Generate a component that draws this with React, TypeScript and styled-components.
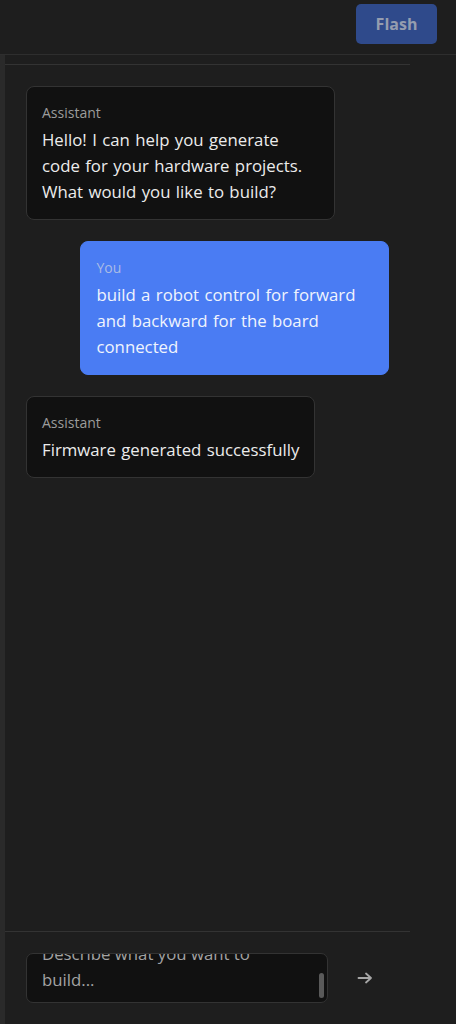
import React from "react";
import styled, { createGlobalStyle } from "styled-components";

const Global = createGlobalStyle`
  html, body { margin: 0; padding: 0; background: #1e1e1e; }
  body { font-family: "Open Sans", "Noto Sans", sans-serif; }
  * { box-sizing: border-box; }
`;

const Page = styled.div`
  height: 1024px;
  display: flex;
  flex-direction: column;
  background: #1e1e1e;
  color: #e8e8e8;
`;

const Header = styled.header`
  height: 55px;
  flex: none;
  display: flex;
  justify-content: flex-end;
  align-items: flex-start;
  padding: 4px 19px 0 0;
  border-bottom: 1px solid #2e2e2e;
`;

const FlashButton = styled.button`
  width: 81px;
  height: 40px;
  border: none;
  border-radius: 5px;
  background: #2f4a8b;
  color: #959daf;
  font-family: inherit;
  font-size: 16px;
  font-weight: 700;
`;

const Body = styled.div`
  flex: 1;
  display: flex;
  min-height: 0;
`;

const Strip = styled.div`
  width: 5px;
  flex: none;
  background: #2a2a2a;
`;

const ChatPanel = styled.section`
  width: 405px;
  flex: none;
  display: flex;
  flex-direction: column;
  padding-top: 9px;
`;

const Messages = styled.div`
  flex: 1;
  border-top: 1px solid #333333;
  padding: 21px;
  display: flex;
  flex-direction: column;
  gap: 21px;
`;

const Bubble = styled.div<{ $user?: boolean }>`
  max-width: 85%;
  align-self: ${(p) => (p.$user ? "flex-end" : "flex-start")};
  background: ${(p) => (p.$user ? "#4a7cf3" : "#111111")};
  border: 1px solid ${(p) => (p.$user ? "#4a7cf3" : "#333333")};
  border-radius: 8px;
  padding: 16px 15px 14px;
`;

const Role = styled.div<{ $user?: boolean }>`
  font-size: 14px;
  line-height: 20px;
  margin-bottom: 4px;
  color: ${(p) => (p.$user ? "#a9bbe6" : "#9c9c9c")};
`;

const Text = styled.div<{ $user?: boolean }>`
  font-size: 16.8px;
  line-height: 26px;
  word-spacing: 1px;
  color: ${(p) => (p.$user ? "#f0f4fd" : "#ececec")};
`;

const Composer = styled.div`
  flex: none;
  border-top: 1px solid #333333;
  padding: 21px;
  display: flex;
  align-items: center;
  gap: 12px;
`;

const Field = styled.div`
  position: relative;
  flex: 1;
  height: 50px;
  background: #111111;
  border: 1px solid #333333;
  border-radius: 7px;
  overflow: hidden;
  display: flex;
  flex-direction: column;
  justify-content: flex-end;
  padding: 0 50px 9px 15px;
`;

const Placeholder = styled.div`
  font-size: 16.8px;
  line-height: 26px;
  color: #a3a3a3;
`;

const Thumb = styled.div`
  position: absolute;
  right: 3px;
  top: 19px;
  width: 5px;
  height: 25px;
  border-radius: 3px;
  background: #5a5a5a;
`;

const SendButton = styled.button`
  width: 49px;
  height: 40px;
  flex: none;
  background: transparent;
  border: none;
  padding: 0;
  color: #a6a6a6;
  display: flex;
  align-items: center;
  justify-content: center;
`;

const Rest = styled.div`
  flex: 1;
`;

const messages = [
  {
    user: false,
    text: "Hello! I can help you generate code for your hardware projects. What would you like to build?",
  },
  {
    user: true,
    text: "build a robot control for forward and backward for the board connected",
  },
  { user: false, text: "Firmware generated successfully" },
];

export default function App() {
  return (
    <Page>
      <Global />
      <Header>
        <FlashButton>Flash</FlashButton>
      </Header>
      <Body>
        <Strip />
        <ChatPanel>
          <Messages>
            {messages.map((m, i) => (
              <Bubble key={i} $user={m.user}>
                <Role $user={m.user}>{m.user ? "You" : "Assistant"}</Role>
                <Text $user={m.user}>{m.text}</Text>
              </Bubble>
            ))}
          </Messages>
          <Composer>
            <Field>
              <Placeholder>Describe what you want to build...</Placeholder>
              <Thumb />
            </Field>
            <SendButton aria-label="Send">
              <svg width="16" height="12" viewBox="0 0 16 12" fill="none">
                <path
                  d="M1.5 6H14M9 1.5L14 6L9 10.5"
                  stroke="currentColor"
                  strokeWidth="1.8"
                  strokeLinecap="round"
                  strokeLinejoin="round"
                />
              </svg>
            </SendButton>
          </Composer>
        </ChatPanel>
        <Rest />
      </Body>
    </Page>
  );
}
